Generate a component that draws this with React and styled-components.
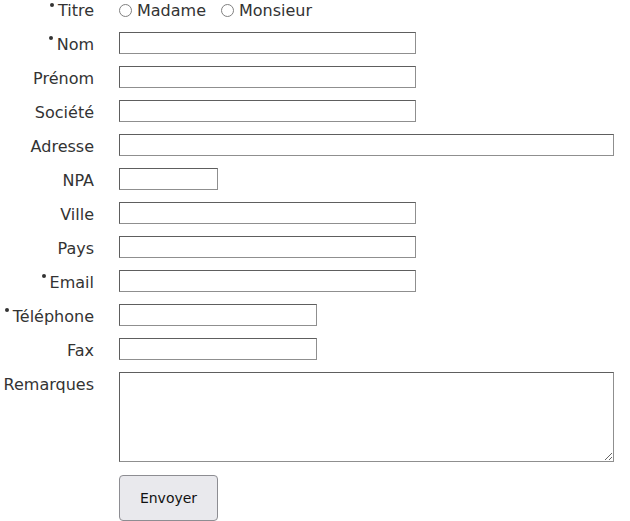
import React from "react";
import styled, { createGlobalStyle } from "styled-components";

const Global = createGlobalStyle`
  html, body { margin: 0; padding: 0; background: #fff; }
  body { font-family: "DejaVu Sans", "Liberation Sans", sans-serif; color: #333; }
`;

const Form = styled.form`
  display: grid;
  grid-template-columns: 94px 495px;
  column-gap: 25px;
  row-gap: 12px;
  align-items: start;
  padding: 0;
`;

const Label = styled.label`
  display: flex;
  justify-content: flex-end;
  align-items: flex-start;
  gap: 4px;
  font-size: 16px;
  line-height: 19px;
  padding-top: ${(p) => (p.$short ? "1px" : "3px")};
  color: #333;
  white-space: nowrap;
`;

const Dot = styled.span`
  width: 4px;
  height: 4px;
  border-radius: 50%;
  background: #333;
  margin-top: ${(p) => (p.$short ? "2px" : "1px")};
`;

const RadioGroup = styled.div`
  display: flex;
  align-items: center;
  gap: 15px;
  height: 20px;
`;

const RadioOption = styled.label`
  display: flex;
  align-items: center;
  gap: 5px;
  font-size: 16px;
  line-height: 20px;
  padding-top: 1px;
  color: #333;
`;

const RadioCircle = styled.span`
  width: 11px;
  height: 11px;
  border: 1.3px solid #808080;
  border-radius: 50%;
`;

const TextInput = styled.input`
  box-sizing: border-box;
  width: ${(p) => p.$w}px;
  height: 22px;
  margin: 0;
  padding: 1px 3px;
  border: 1px solid #8f8f8f;
  border-top-color: #5e5e5e;
  border-left-color: #5e5e5e;
  font-family: inherit;
  font-size: 13px;
  background: #fff;
  outline: none;
  display: block;
`;

const TextArea = styled.textarea`
  box-sizing: border-box;
  width: 495px;
  height: 90px;
  margin: 0;
  padding: 2px;
  border: 1px solid #8f8f8f;
  border-top-color: #5e5e5e;
  border-left-color: #5e5e5e;
  font-family: inherit;
  font-size: 13px;
  display: block;
  outline: none;
`;

const Button = styled.button`
  box-sizing: border-box;
  width: 99px;
  height: 46px;
  margin-top: 1px;
  border: 1px solid #8d8d92;
  border-radius: 4px;
  background: #e9e9ed;
  font-family: "DejaVu Sans", sans-serif;
  font-size: 14px;
  color: #111;
  cursor: pointer;
  display: block;
`;

const fields = [
  { label: "Nom", req: true, w: 297 },
  { label: "Prénom", w: 297 },
  { label: "Société", w: 297 },
  { label: "Adresse", w: 495 },
  { label: "NPA", w: 99 },
  { label: "Ville", w: 297 },
  { label: "Pays", w: 297 },
  { label: "Email", req: true, w: 297 },
  { label: "Téléphone", req: true, w: 198 },
  { label: "Fax", w: 198 },
];

export default function App() {
  return (
    <>
      <Global />
      <Form onSubmit={(e) => e.preventDefault()}>
        <Label $short>
          <Dot $short />
          Titre
        </Label>
        <RadioGroup>
          <RadioOption>
            <RadioCircle />
            Madame
          </RadioOption>
          <RadioOption>
            <RadioCircle />
            Monsieur
          </RadioOption>
        </RadioGroup>
        {fields.map((f) => (
          <React.Fragment key={f.label}>
            <Label>
              {f.req && <Dot />}
              {f.label}
            </Label>
            <div>
              <TextInput type="text" $w={f.w} />
            </div>
          </React.Fragment>
        ))}
        <Label>Remarques</Label>
        <TextArea />
        <span />
        <div>
          <Button type="submit">Envoyer</Button>
        </div>
      </Form>
    </>
  );
}
